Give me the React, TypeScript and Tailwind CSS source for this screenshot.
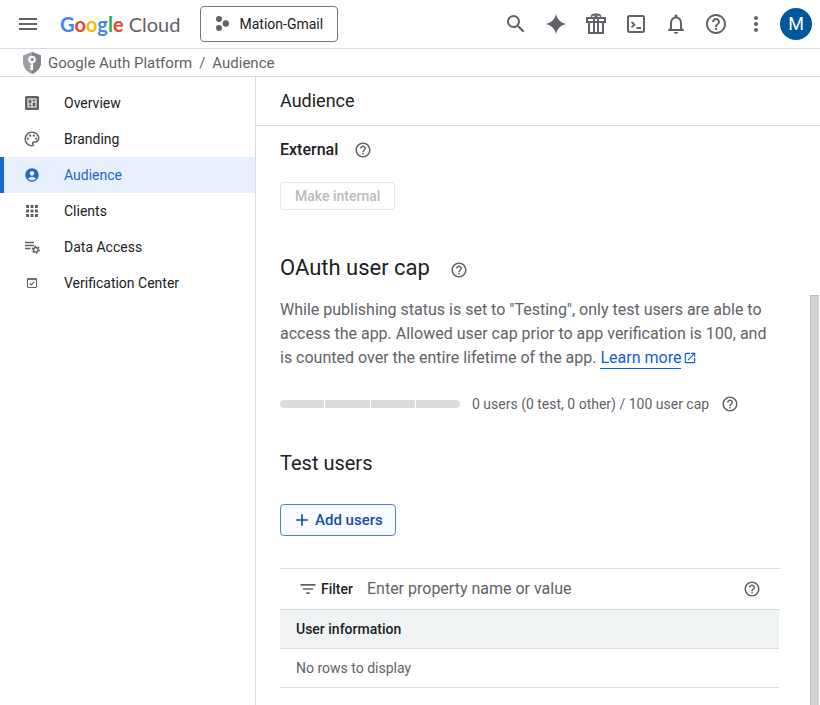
import type { ReactNode } from "react";
import {
  MdAccountCircle,
  MdAdd,
  MdApps,
  MdFilterList,
  MdHelpOutline,
  MdMenu,
  MdMoreVert,
  MdNotificationsNone,
  MdOpenInNew,
  MdOutlinePalette,
  MdSearch,
} from "react-icons/md";

function SparkIcon() {
  return (
    <svg viewBox="0 0 24 24" className="size-6" fill="currentColor" aria-hidden="true">
      <path d="M12 1.500c.900 5.700 4.800 9.600 10.500 10.500C16.800 12.900 12.900 16.800 12 22.500 11.100 16.800 7.200 12.900 1.500 12 7.200 11.100 11.100 7.200 12 1.500z" />
    </svg>
  );
}

function GiftIcon() {
  return (
    <svg viewBox="0 0 24 24" className="size-6" fill="none" stroke="currentColor" strokeWidth="2" aria-hidden="true">
      <path d="M3 6h18v4H3zM5 10v11h14V10M10 6v15M14 6v15" />
      <path d="M12 6C11 1.500 7 1.500 7.500 6M12 6c1-4.500 5-4.500 4.500 0M10.500 3c.5-1.300 2.500-1.300 3 0" strokeWidth="1.600" />
    </svg>
  );
}

function ShellIcon() {
  return (
    <svg viewBox="0 0 24 24" className="size-6" fill="none" stroke="currentColor" strokeWidth="2" aria-hidden="true">
      <rect x="4" y="4" width="16" height="16" rx="1.500" />
      <path d="M7.500 10l3 2.700-3 2.700M12.500 16H17" strokeWidth="1.800" />
    </svg>
  );
}

function ProjectIcon() {
  return (
    <svg viewBox="0 0 16 16" className="size-4" fill="currentColor" aria-hidden="true">
      <circle cx="4" cy="3" r="3" />
      <circle cx="4" cy="12" r="3" />
      <circle cx="10.800" cy="7.500" r="3.200" />
    </svg>
  );
}

function ShieldIcon() {
  return (
    <svg viewBox="0 0 20 22" className="h-[22px] w-5" aria-hidden="true">
      <path d="M10 0L1 3.500V10c0 5.500 3.800 10 9 12 5.200-2 9-6.500 9-12V3.500z" fill="#9aa0a6" />
      <path d="M10 0v22c5.200-2 9-6.500 9-12V3.500z" fill="#80868b" />
      <circle cx="10" cy="7.500" r="2.800" fill="none" stroke="#fff" strokeWidth="2" />
      <path d="M9 10.500h2V18H9zM8 13h2v1.500H8zM8 16h2v1.500H8z" fill="#fff" />
    </svg>
  );
}

function OverviewIcon() {
  return (
    <svg viewBox="0 0 16 16" className="size-4" aria-hidden="true">
      <rect x="1" y="1" width="14" height="14" rx="1.500" fill="currentColor" />
      <path d="M3.500 3.500h9v9h-9z" fill="#fff" />
      <path d="M4.500 4.500h3v4h-3zM4.500 9.500h3v2h-3zM8.500 4.500h3v2h-3zM8.500 7.500h3v4h-3z" fill="currentColor" />
    </svg>
  );
}

function DataAccessIcon() {
  return (
    <svg viewBox="0 0 16 16" className="size-4" fill="none" stroke="currentColor" aria-hidden="true">
      <path d="M1 3.500h9M1 6.500h9M1 9.500h5.500" strokeWidth="1.400" />
      <circle cx="11.800" cy="10.700" r="2.300" strokeWidth="1.500" />
      <circle cx="11.800" cy="10.700" r="3.500" strokeWidth="1.400" strokeDasharray="1.600 2.060" />
    </svg>
  );
}

function VerificationIcon() {
  return (
    <svg viewBox="0 0 16 16" className="size-4" fill="none" stroke="currentColor" aria-hidden="true">
      <rect x="3.500" y="3.500" width="9" height="9" rx="0.500" />
      <path d="M3.500 4h9" strokeWidth="1.800" />
      <path d="M5.800 8.500l1.500 1.500 3-3.200" strokeWidth="1.200" />
    </svg>
  );
}

const tools: { label: string; icon: ReactNode }[] = [
  { label: "Search", icon: <MdSearch className="size-6" /> },
  { label: "Gemini", icon: <SparkIcon /> },
  { label: "Offers", icon: <GiftIcon /> },
  { label: "Cloud Shell", icon: <ShellIcon /> },
  { label: "Notifications", icon: <MdNotificationsNone className="size-6" /> },
  { label: "Help", icon: <MdHelpOutline className="size-6" /> },
  { label: "More options", icon: <MdMoreVert className="size-6" /> },
];

const navItems: { label: string; icon: ReactNode; active?: boolean }[] = [
  { label: "Overview", icon: <OverviewIcon /> },
  { label: "Branding", icon: <MdOutlinePalette className="size-[18px]" /> },
  { label: "Audience", icon: <MdAccountCircle className="size-4" />, active: true },
  { label: "Clients", icon: <MdApps className="size-[18px]" /> },
  { label: "Data Access", icon: <DataAccessIcon /> },
  { label: "Verification Center", icon: <VerificationIcon /> },
];

function HelpButton({ label }: { label: string }) {
  return (
    <button type="button" aria-label={label} className="text-[#5f6368]">
      <MdHelpOutline className="size-[18px]" />
    </button>
  );
}

function TopBar() {
  return (
    <header className="flex h-[49px] items-center border-b border-[#dadce0] pl-4 pr-2">
      <button type="button" aria-label="Main menu" className="text-[#5f6368]">
        <MdMenu className="size-6" />
      </button>
      <a href="#home" className="ml-5 whitespace-nowrap font-['Lato',sans-serif] text-xl text-[#5f6368]">
        <span className="font-bold">
          <span className="text-[#4285f4]">G</span>
          <span className="text-[#ea4335]">o</span>
          <span className="text-[#fbbc04]">o</span>
          <span className="text-[#4285f4]">g</span>
          <span className="text-[#34a853]">l</span>
          <span className="text-[#ea4335]">e</span>
        </span>{" "}
        Cloud
      </a>
      <button
        type="button"
        className="ml-5 flex h-9 shrink-0 items-center gap-2 rounded border border-[#747775] px-[14px] text-sm text-[#202124]"
      >
        <span className="text-[#5f6368]">
          <ProjectIcon />
        </span>
        Mation-Gmail
      </button>
      <div className="ml-auto flex items-center text-[#5f6368]">
        {tools.map((tool) => (
          <button key={tool.label} type="button" aria-label={tool.label} className="flex size-10 items-center justify-center">
            {tool.icon}
          </button>
        ))}
        <button type="button" aria-label="Account" className="ml-1 size-8 rounded-full bg-[#01579b] text-lg text-white">
          M
        </button>
      </div>
    </header>
  );
}

function Breadcrumb() {
  return (
    <nav
      aria-label="Breadcrumb"
      className="flex h-7 items-center border-b border-[#dadce0] pl-[22px] text-[15px] leading-5 text-[#5f6368]"
    >
      <ShieldIcon />
      <a href="#platform" className="ml-[6px]">
        Google Auth Platform
      </a>
      <span className="mx-[7px]">/</span>
      <a href="#audience">Audience</a>
    </nav>
  );
}

function Sidebar() {
  return (
    <nav aria-label="Google Auth Platform" className="w-64 shrink-0 border-r border-[#dadce0] pt-2 text-sm">
      {navItems.map((item) => (
        <a
          key={item.label}
          href={"#" + item.label}
          aria-current={item.active ? "page" : undefined}
          className={
            item.active
              ? "flex h-9 items-center border-l-4 border-[#1967d2] bg-[#e8f0fe] text-[#1967d2]"
              : "flex h-9 items-center border-l-4 border-transparent text-[#202124]"
          }
        >
          <span className={item.active ? "ml-4 flex w-6 justify-center" : "ml-4 flex w-6 justify-center text-[#5f6368]"}>
            {item.icon}
          </span>
          <span className="ml-5">{item.label}</span>
        </a>
      ))}
    </nav>
  );
}

function UserCap() {
  return (
    <section>
      <div className="mt-[42px] flex items-center gap-5">
        <h2 className="text-[22px] leading-8 text-[#202124]">OAuth user cap</h2>
        <span className="flex pt-1">
          <HelpButton label="About the user cap" />
        </span>
      </div>
      <p className="mt-[14px] max-w-[490px] text-base text-[#5f6368]">
        While publishing status is set to "Testing", only test users are able to access the app. Allowed user cap prior
        to app verification is 100, and is counted over the entire lifetime of the app.{" "}
        <a href="#learn" className="whitespace-nowrap text-[#0b5fe0]">
          <span className="inline-block border-b border-current leading-5">Learn more</span>
          <MdOpenInNew className="ml-[2px] inline size-[14px] align-[-2px]" />
        </a>
      </p>
      <div className="mt-6 flex h-5 items-center gap-3 text-sm text-[#5f6368]">
        <div
          role="progressbar"
          aria-label="User cap"
          aria-valuenow={0}
          aria-valuemax={100}
          className="flex h-2 w-[180px] gap-px overflow-hidden rounded"
        >
          <span className="flex-1 bg-[#dadce0]" />
          <span className="flex-1 bg-[#dadce0]" />
          <span className="flex-1 bg-[#dadce0]" />
          <span className="flex-1 bg-[#dadce0]" />
        </div>
        <span>0 users (0 test, 0 other) / 100 user cap</span>
        <HelpButton label="About user counts" />
      </div>
    </section>
  );
}

function TestUsers() {
  return (
    <section>
      <h2 className="mt-[35px] text-xl leading-7 text-[#202124]">Test users</h2>
      <button
        type="button"
        className="mt-[27px] flex h-8 items-center gap-[3px] rounded border border-[#4f83d9] bg-[#f8fbff] pl-[11px] pr-3 text-[15px] font-medium text-[#174ea6]"
      >
        <MdAdd className="size-5" />
        Add users
      </button>
      <div className="mt-8 flex h-[42px] items-center border-y border-[#dadce0] pl-[18px] pr-[19px]">
        <label htmlFor="filter" className="flex items-center gap-[3px] text-sm font-medium text-[#202124]">
          <MdFilterList className="size-5 text-[#5f6368]" />
          Filter
        </label>
        <input
          id="filter"
          type="text"
          placeholder="Enter property name or value"
          className="ml-[14px] min-w-0 flex-1 text-base outline-none placeholder:text-[#5f6368]"
        />
        <HelpButton label="About filtering" />
      </div>
      <div className="pr-px">
        <table className="w-full border-separate border-spacing-0 text-left text-sm">
          <thead>
            <tr className="bg-[#eff3f4] text-[#202124]">
              <th scope="col" className="h-[39px] border-b border-[#dadce0] px-4 py-0 font-medium">
                User information
              </th>
            </tr>
          </thead>
          <tbody>
            <tr className="text-[#5f6368]">
              <td className="h-[39px] border-b border-[#dadce0] px-4 py-0">No rows to display</td>
            </tr>
          </tbody>
        </table>
      </div>
    </section>
  );
}

export default function App() {
  return (
    <div className="flex min-h-screen flex-col bg-white font-['Roboto',sans-serif]">
      <TopBar />
      <Breadcrumb />
      <div className="flex flex-1">
        <Sidebar />
        <main className="flex min-w-0 flex-1 flex-col">
          <h1 className="flex h-[49px] items-center border-b border-[#dadce0] pl-6 text-lg text-[#202124]">Audience</h1>
          <div className="flex flex-1">
            <div className="min-w-0 flex-1 pl-6 pr-[30px] pt-3">
              <div className="flex h-6 items-center gap-4 text-base font-medium text-[#202124]">
                External
                <HelpButton label="About user type" />
              </div>
              <button
                type="button"
                disabled
                className="mt-5 h-7 rounded border border-[#e4e5e7] px-[14px] text-sm font-medium text-[#b9bbbd]"
              >
                Make internal
              </button>
              <UserCap />
              <TestUsers />
            </div>
            <div aria-hidden="true" className="mr-px mt-[169px] w-[9px] shrink-0 border-l border-t border-[#bdbdbd] bg-[#d2d2d2]" />
          </div>
        </main>
      </div>
    </div>
  );
}
